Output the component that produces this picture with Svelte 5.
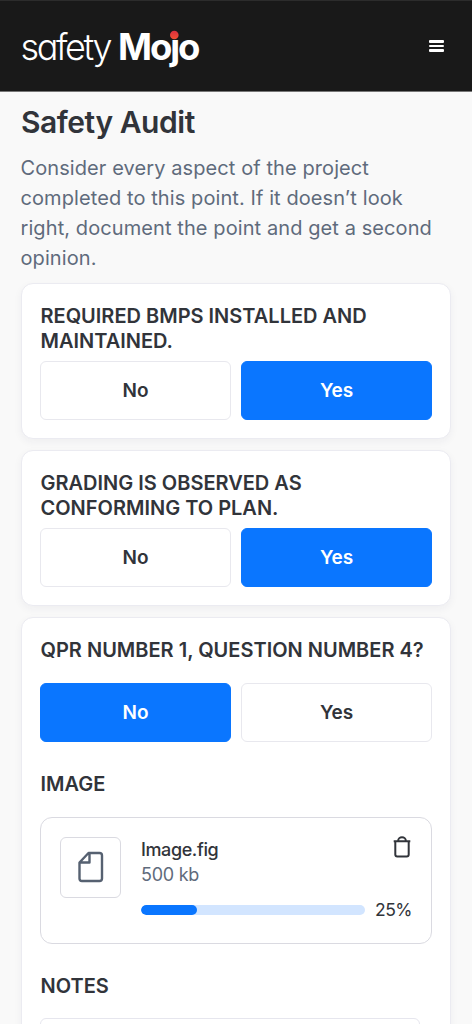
<script lang="ts">
  type Answer = 'No' | 'Yes';
  type Question = {
    title: string;
    answer: Answer;
    detailed?: boolean;
  };

  const options: Answer[] = ['No', 'Yes'];

  let questions: Question[] = $state([
    { title: 'Required BMPs installed and maintained.', answer: 'Yes' },
    { title: 'Grading is observed as conforming to plan.', answer: 'Yes' },
    { title: 'QPR number 1, question number 4?', answer: 'No', detailed: true },
  ]);
  let upload = $state({ name: 'Image.fig', size: '500 kb', progress: 25 });
  let notes = $state('');
</script>

<div class="page">
  <header class="topbar">
    <svg class="logo" viewBox="0 0 184 52" role="img" aria-label="safety Mojo">
      <defs>
        <linearGradient id="dot" x1="0" y1="0" x2="0" y2="1">
          <stop offset="0" stop-color="#d92f3f" />
          <stop offset="1" stop-color="#f04f32" />
        </linearGradient>
      </defs>
      <text class="logo-light" x="0.5" y="40" textLength="92" lengthAdjust="spacing">safety</text>
      <text class="logo-bold" x="98" y="40" textLength="82.5" lengthAdjust="spacing">Mojo</text>
      <rect x="148" y="9" width="13" height="11" fill="#191919" />
      <circle cx="154.3" cy="15" r="4.3" fill="url(#dot)" />
    </svg>
    <button class="menu" aria-label="Open menu">
      <span></span>
      <span></span>
      <span></span>
    </button>
  </header>

  <main>
    <h1>Safety Audit</h1>
    <p class="intro">
      Consider every aspect of the project completed to this point. If it doesn’t look right, document the point and get a second opinion.
    </p>

    {#each questions as question}
      <section class="card" class:detailed={question.detailed}>
        <h2>{question.title}</h2>
        <div class="options">
          {#each options as option}
            <button
              class="option"
              class:selected={question.answer === option}
              aria-pressed={question.answer === option}
              onclick={() => (question.answer = option)}
            >
              {option}
            </button>
          {/each}
        </div>

        {#if question.detailed}
          <h2 class="image-title">Image</h2>
          <div class="upload">
            <div class="thumb">
              <svg width="26" height="32" viewBox="0 0 26 32" aria-hidden="true">
                <path d="M10.5 2H21.5a2.5 2.5 0 0 1 2.5 2.5v23A2.5 2.5 0 0 1 21.5 30H4a2.5 2.5 0 0 1-2.5-2.5V11.5L10.5 2ZM11.5 2v9.5H1.5" />
              </svg>
            </div>
            <div class="upload-info">
              <div class="upload-head">
                <div>
                  <div class="file-name">{upload.name}</div>
                  <div class="file-size">{upload.size}</div>
                </div>
                <button class="trash" aria-label="Delete file">
                  <svg width="18" height="22" viewBox="0 0 18 22" aria-hidden="true">
                    <path d="M.7 5.3h16.6M2.3 5.3v13.2a2 2 0 0 0 2 2h9.4a2 2 0 0 0 2-2V5.3M5.2 5V4.6a3.8 3.3 0 0 1 7.6 0V5" />
                  </svg>
                </button>
              </div>
              <div class="progress-row">
                <div class="track">
                  <div class="fill" style="width: {upload.progress}%"></div>
                </div>
                <span>{upload.progress}%</span>
              </div>
            </div>
          </div>

          <h2 class="notes-title">Notes</h2>
          <textarea aria-label="Notes" bind:value={notes}></textarea>
        {/if}
      </section>
    {/each}
  </main>
</div>

<style>
  :global(body) {
    background: #f9f9f9;
  }

  .page {
    height: 1024px;
    overflow: hidden;
    background: #f9f9f9;
    color: #31343a;
    font-family: Inter, 'Liberation Sans', sans-serif;
  }

  button {
    margin: 0;
    padding: 0;
    border: 0;
    background: none;
    color: inherit;
    font: inherit;
    cursor: pointer;
  }

  .topbar {
    box-sizing: border-box;
    height: 92px;
    display: flex;
    align-items: center;
    justify-content: space-between;
    padding: 0 28px 0 20px;
    border-top: 1px solid #2c2c2c;
    border-bottom: 1px solid #777;
    background: #191919;
  }

  .logo {
    width: 184px;
    height: 52px;
    overflow: visible;
    fill: #fff;
    font-feature-settings: 'cv11';
  }

  .logo-light {
    font-size: 36px;
    font-weight: 300;
  }

  .logo-bold {
    font-size: 36.5px;
    font-weight: 700;
  }

  .menu {
    display: grid;
    gap: 2px;
  }

  .menu span {
    width: 15px;
    height: 2.5px;
    border-radius: 1px;
    background: #fff;
  }

  main {
    padding: 10px 21px 0;
  }

  h1 {
    margin: 0;
    font-size: 30px;
    font-weight: 600;
    line-height: 40px;
    letter-spacing: -0.45px;
  }

  .intro {
    margin: 11px -5px 10px -0.5px;
    color: #5f6b7c;
    font-size: 20px;
    line-height: 30px;
    letter-spacing: 0.09px;
  }

  .card {
    box-sizing: border-box;
    height: 156px;
    margin-bottom: 11px;
    padding: 20px 18px 0;
    border: 1px solid #ebebf1;
    border-radius: 12px;
    background: #fff;
    box-shadow: 0 3px 8px rgba(40, 40, 80, 0.05);
  }

  .card.detailed {
    height: 600px;
  }

  h2 {
    margin: 0;
    padding-left: 0.5px;
    font-size: 20px;
    font-weight: 600;
    line-height: 25px;
    text-transform: uppercase;
  }

  .options {
    display: grid;
    grid-template-columns: 1fr 1fr;
    gap: 10px;
    margin-top: 7px;
  }

  .detailed .options {
    margin-top: 20px;
  }

  .option {
    box-sizing: border-box;
    height: 59px;
    border: 1px solid #e8e8ee;
    border-radius: 6px;
    background: #fff;
    font-size: 19px;
    font-weight: 600;
    letter-spacing: -0.1px;
  }

  .option.selected {
    border-color: #0a76ff;
    background: #0a76ff;
    color: #fff;
  }

  .image-title {
    margin-top: 30px;
  }

  .upload {
    box-sizing: border-box;
    height: 127px;
    display: flex;
    gap: 20px;
    margin-top: 20px;
    padding: 19px;
    border: 1.5px solid #dadae1;
    border-radius: 12px;
  }

  .thumb {
    box-sizing: border-box;
    flex: none;
    width: 61px;
    height: 61px;
    display: grid;
    place-items: center;
    border: 1px solid #dadae1;
    border-radius: 6px;
  }

  .thumb svg,
  .trash svg {
    display: block;
    fill: none;
    stroke-linejoin: round;
  }

  .thumb svg {
    margin-top: -2px;
    stroke: #566171;
    stroke-width: 2.4;
  }

  .trash {
    margin: -1px 1.5px 0 0;
  }

  .trash svg {
    stroke: #31343a;
    stroke-width: 2;
  }

  .upload-info {
    flex: 1;
    min-width: 0;
  }

  .upload-head {
    display: flex;
    align-items: flex-start;
    justify-content: space-between;
    font-size: 18px;
    line-height: 25px;
  }

  .file-name {
    font-weight: 500;
    letter-spacing: -0.4px;
  }

  .file-size {
    letter-spacing: -0.25px;
    color: #5f6b7c;
  }

  .progress-row {
    display: flex;
    align-items: center;
    justify-content: space-between;
    margin-top: 10px;
    font-size: 17.5px;
    line-height: 25px;
    letter-spacing: -0.5px;
  }

  .track {
    width: 224px;
    height: 10px;
    overflow: hidden;
    border-radius: 5px;
    background: #d2e5ff;
  }

  .fill {
    height: 100%;
    border-radius: 5px;
    background: #0a76ff;
  }

  .notes-title {
    margin-top: 30px;
  }

  textarea {
    box-sizing: border-box;
    display: block;
    width: 380px;
    height: 100px;
    margin-top: 19px;
    border: 1px solid #e6e6ee;
    border-radius: 6px;
    background: #fff;
    font: inherit;
    resize: none;
  }
</style>
